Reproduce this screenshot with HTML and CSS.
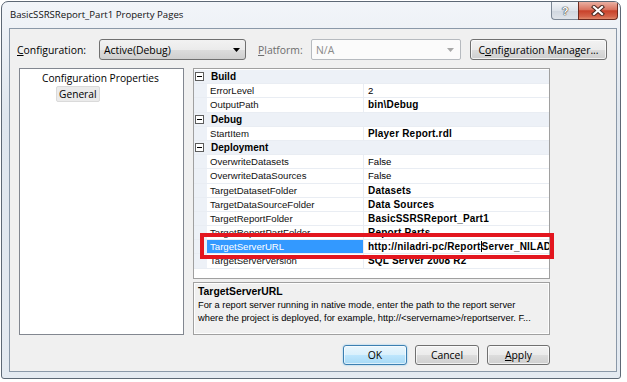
FILE: index.html
```html
<!DOCTYPE html>
<html lang="en">
<head>
    <meta charset="UTF-8">
    <title>BasicSSRSReport_Part1 Property Pages</title>
    <link rel="stylesheet" href="styles.css">
</head>
<body>
    <div class="window">
        <div class="titlebar">
            <span class="title">BasicSSRSReport_Part1 Property Pages</span>
            <div class="caption">
                <span class="cap-btn help">?</span>
                <span class="cap-btn close">
                    <svg width="14" height="11" viewBox="0 0 14 11">
                        <path d="M3 2 L11 9 M11 2 L3 9" stroke="#4a2a22" stroke-width="4.2" stroke-linecap="square"/>
                        <path d="M3 2 L11 9 M11 2 L3 9" stroke="#fff" stroke-width="2.2" stroke-linecap="square"/>
                    </svg>
                </span>
            </div>
        </div>
        <div class="frame">
            <div class="client">
                <div class="config-row">
                    <span class="lbl lbl-config"><u>C</u>onfiguration:</span>
                    <div class="combo combo-config">
                        <span>Active(Debug)</span>
                        <svg class="arrow" width="7" height="4" viewBox="0 0 7 4"><polygon points="0,0 7,0 3.5,4" fill="#000"/></svg>
                    </div>
                    <span class="lbl lbl-platform"><u>P</u>latform:</span>
                    <div class="combo combo-platform">
                        <span>N/A</span>
                        <svg class="arrow" width="7" height="4" viewBox="0 0 7 4"><polygon points="0,0 7,0 3.5,4" fill="#a8a8a8"/></svg>
                    </div>
                    <button class="btn btn-manager">C<u>o</u>nfiguration Manager...</button>
                </div>

                <div class="main">
                    <div class="tree">
                        <div class="tree-root">Configuration Properties</div>
                        <div class="tree-item selected">General</div>
                    </div>

                    <div class="pane">
                        <div class="grid-wrap">
                            <div class="grid">
                                <div class="row cat"><span class="margin"><i class="minus"></i></span><span class="cat-name">Build</span></div>
                                <div class="row"><span class="margin"></span><span class="name">ErrorLevel</span><span class="value">2</span></div>
                                <div class="row"><span class="margin"></span><span class="name">OutputPath</span><span class="value bold">bin\Debug</span></div>
                                <div class="row cat"><span class="margin"><i class="minus"></i></span><span class="cat-name">Debug</span></div>
                                <div class="row"><span class="margin"></span><span class="name">StartItem</span><span class="value bold">Player Report.rdl</span></div>
                                <div class="row cat"><span class="margin"><i class="minus"></i></span><span class="cat-name">Deployment</span></div>
                                <div class="row"><span class="margin"></span><span class="name">OverwriteDatasets</span><span class="value">False</span></div>
                                <div class="row"><span class="margin"></span><span class="name">OverwriteDataSources</span><span class="value">False</span></div>
                                <div class="row"><span class="margin"></span><span class="name">TargetDatasetFolder</span><span class="value bold">Datasets</span></div>
                                <div class="row"><span class="margin"></span><span class="name">TargetDataSourceFolder</span><span class="value bold">Data Sources</span></div>
                                <div class="row"><span class="margin"></span><span class="name">TargetReportFolder</span><span class="value bold">BasicSSRSReport_Part1</span></div>
                                <div class="row"><span class="margin"></span><span class="name">TargetReportPartFolder</span><span class="value bold">Report Parts</span></div>
                                <div class="row selected"><span class="margin"></span><span class="name">TargetServerURL</span><span class="value bold">http://niladri-pc/Report<i class="caret"></i>Server_NILADRI</span></div>
                                <div class="row"><span class="margin"></span><span class="name">TargetServerVersion</span><span class="value bold">SQL Server 2008 R2</span></div>
                            </div>
                            <div class="callout"></div>
                        </div>

                        <div class="desc">
                            <div class="desc-title">TargetServerURL</div>
                            <div class="desc-text">For a report server running in native mode, enter the path to the report server<br>where the project is deployed, for example, http://&lt;servername&gt;/reportserver. F...</div>
                        </div>
                    </div>
                </div>

                <div class="buttons">
                    <button class="btn btn-default">OK</button>
                    <button class="btn">Cancel</button>
                    <button class="btn btn-apply"><u>A</u>pply</button>
                </div>
            </div>
        </div>
    </div>
</body>
</html>
```

FILE: styles.css
```css
body {
    margin: 0;
    padding: 1px 0 0 1px;
    background: #fff;
    font-family: "Open Sans", "Liberation Sans", sans-serif;
    font-size: 10px;
    color: #000;
}
.window {
    width: 620px;
    height: 378px;
    box-sizing: border-box;
    border: 1px solid #5d6875;
    border-radius: 7px 7px 3px 3px;
    background: linear-gradient(#f2f5f9, #dfe6ee 30%, #e4eaf1);
    overflow: hidden;
}
.titlebar {
    display: flex;
    justify-content: space-between;
    align-items: flex-start;
    height: 26px;
    padding-left: 8px;
}
.title {
    line-height: 26px;
    font-size: 9.6px;
    color: #111;
}
.caption {
    display: flex;
    margin-right: 2px;
}
.cap-btn {
    display: flex;
    align-items: center;
    justify-content: center;
    height: 18px;
    box-sizing: border-box;
    border: 1px solid #7b8795;
    border-top: none;
}
.help {
    width: 27px;
    border-radius: 0 0 0 4px;
    border-right: none;
    background: linear-gradient(#f3f5f8, #dde3ea 50%, #cfd6df 51%, #dfe4ea);
    color: #fff;
    font-family: "Liberation Sans", sans-serif;
    font-weight: bold;
    font-size: 11px;
    text-shadow: 0 0 1px #333, 0 0 1px #333, 0 0 1px #555;
}
.close {
    width: 40px;
    border-color: #6d2a1f;
    border-radius: 0 0 4px 0;
    background: linear-gradient(#eab0a2, #d9735f 45%, #c8412a 52%, #d4634a 85%, #e08a6c);
}
.frame {
    padding: 0 3px 6px 7px;
}
.client {
    height: 344px;
    box-sizing: border-box;
    border: 1px solid #8a98a8;
    background: #f0f0f0;
}

/* configuration row */
.config-row {
    display: flex;
    align-items: center;
    height: 21px;
    padding: 10px 0 0 7px;
}
.lbl {
    font-size: 10.4px;
}
.lbl-config {
    width: 82px;
}
.lbl-platform {
    width: 53px;
    margin-left: 12px;
    color: #6d6d6d;
}
.combo {
    display: flex;
    align-items: center;
    justify-content: space-between;
    height: 21px;
    box-sizing: border-box;
    padding: 0 5px 0 4px;
    font-size: 10.4px;
}
.combo-config {
    width: 147px;
    border: 1px solid #707070;
    border-radius: 3px;
    background: linear-gradient(#f2f2f2, #ebebeb 50%, #dddddd 51%, #cfcfcf);
}
.combo-platform {
    width: 150px;
    padding-right: 6px;
    border: 1px solid #b6babf;
    border-radius: 2px;
    background: #fbfbfb;
    color: #8a8a8a;
}
.btn {
    height: 20px;
    box-sizing: border-box;
    padding: 0;
    border: 1px solid #707070;
    border-radius: 3px;
    background: linear-gradient(#f2f2f2, #ebebeb 50%, #dddddd 51%, #cfcfcf);
    box-shadow: inset 0 0 0 1px rgba(255,255,255,0.7);
    font-family: "Open Sans", "Liberation Sans", sans-serif;
    font-size: 10.4px;
    color: #000;
}
.btn-manager {
    width: 137px;
    height: 21px;
    margin-left: 9px;
}

/* tree + grid */
.main {
    display: flex;
    gap: 9px;
    margin-top: 8px;
    padding-left: 9px;
}
.tree {
    width: 165px;
    height: 267px;
    box-sizing: border-box;
    border: 1px solid #828790;
    background: #fff;
    padding-top: 2px;
}
.tree-root {
    padding-left: 22px;
    line-height: 15px;
    font-size: 10.2px;
}
.tree-item {
    display: inline-block;
    margin-left: 36px;
    padding: 0 2px;
    line-height: 14px;
    font-size: 10.2px;
}
.tree-item.selected {
    background: #ebebeb;
    border: 1px solid #dadada;
    border-radius: 2px;
}
.pane {
    width: 357px;
}
.grid-wrap {
    position: relative;
    height: 211px;
    box-sizing: border-box;
    border: 1px solid #a0a0a0;
    background: #fff;
}
.grid {
    padding-top: 1px;
    font-family: "Liberation Sans", Arial, sans-serif;
    font-size: 9.6px;
}
.row {
    display: grid;
    grid-template-columns: 13px 157px 1fr;
    height: 14.2px;
    box-sizing: border-box;
    border-bottom: 1px solid #e9edf3;
    line-height: 13px;
    white-space: nowrap;
}
.margin {
    background: #edf1f7;
    display: flex;
    align-items: center;
}
.minus {
    position: relative;
    width: 9px;
    height: 9px;
    margin-left: 1px;
    box-sizing: border-box;
    border: 1px solid #5c5c5c;
    background: #fff;
}
.minus::after {
    content: "";
    position: absolute;
    left: 1px;
    top: 3px;
    width: 5px;
    height: 1px;
    background: #000;
}
.cat {
    background: #edf1f7;
}
.cat-name {
    grid-column: 2 / 4;
    padding-left: 4px;
    font-weight: bold;
    font-size: 10px;
}
.name {
    padding-left: 3px;
    border-right: 1px solid #e9edf3;
    color: #111;
}
.value {
    padding-left: 4px;
    overflow: hidden;
}
.bold {
    font-weight: bold;
    font-size: 10px;
    letter-spacing: 0.2px;
}
.row.selected .name {
    background: #3399ff;
    color: #fff;
}
.caret {
    display: inline-block;
    width: 1px;
    height: 11px;
    background: #000;
    vertical-align: -2px;
}
.callout {
    position: absolute;
    left: 6px;
    top: 164px;
    width: 354px;
    height: 26px;
    box-sizing: border-box;
    border: 4px solid #e3161f;
}
.desc {
    height: 53px;
    margin-top: 3px;
    box-sizing: border-box;
    border: 1px solid #a0a0a0;
    box-shadow: inset 0 0 0 1px #fdfdfd;
    padding: 2px 4px 0;
    font-family: "Liberation Sans", Arial, sans-serif;
    font-size: 9.3px;
    line-height: 13.5px;
}
.desc-title {
    font-weight: bold;
    font-size: 10.4px;
}

/* dialog buttons */
.buttons {
    display: flex;
    justify-content: flex-end;
    gap: 8px;
    margin-top: 10px;
    padding-right: 66px;
}
.buttons .btn {
    width: 64px;
}
.buttons .btn-apply {
    width: 63px;
}
.btn-default {
    border-color: #3c7fb1;
    background: linear-gradient(#eaf6fd, #d9f0fc 50%, #bee6fd 51%, #a7d9f5);
    box-shadow: inset 0 0 0 1px rgba(255,255,255,0.6), 0 0 2px #7ec3ec;
}
```
